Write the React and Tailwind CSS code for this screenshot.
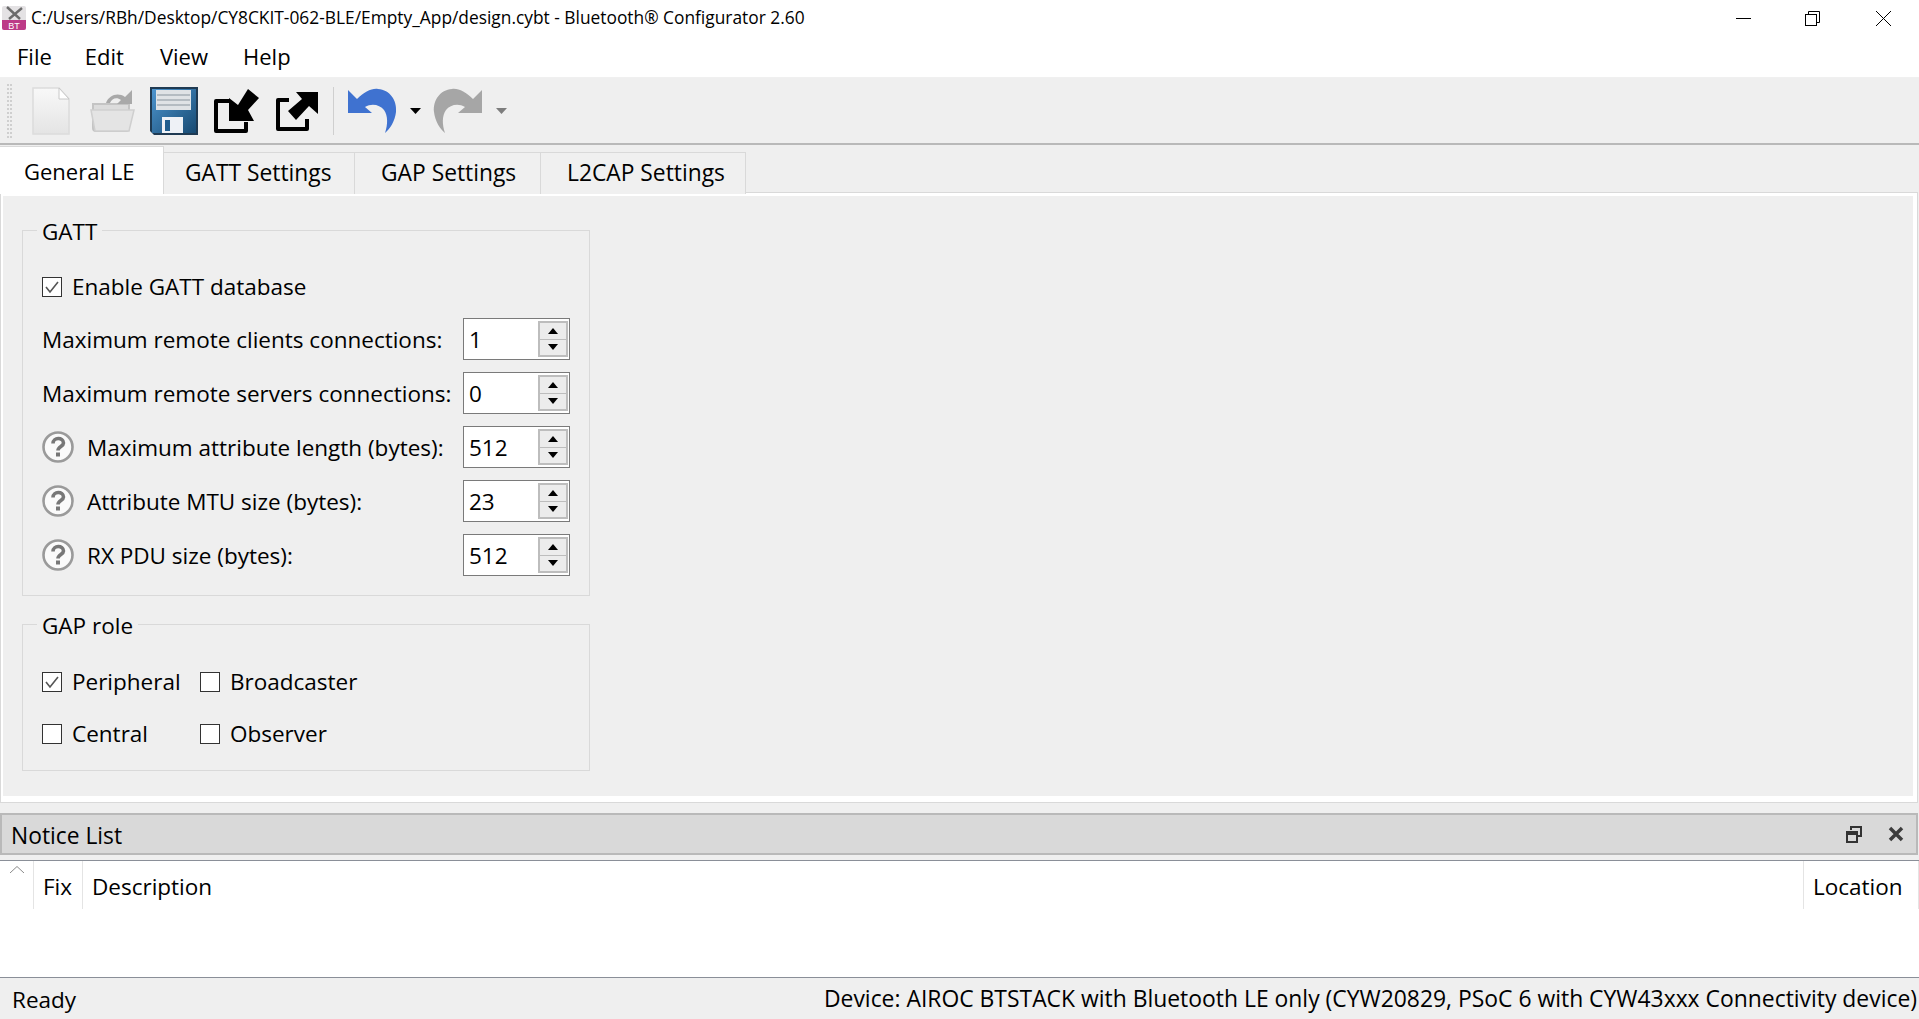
import React from "react";

const font = "font-['Open_Sans',sans-serif]";

const AppIcon = () => (
  <svg width="24" height="24" viewBox="0 0 24 24">
    <rect x="0" y="0" width="24" height="24" rx="2" fill="#e4e2e4" />
    <path d="M0 14h24v8a2 2 0 0 1-2 2H2a2 2 0 0 1-2-2z" fill="#bd3a87" />
    <path d="M5 1l13 12M20 2L7 13" stroke="#6b6b6b" strokeWidth="2.4" />
    <text x="12" y="22.500" textAnchor="middle" fontSize="9" fontFamily="Liberation Sans" fill="#fff">BT</text>
  </svg>
);

const NewIcon = () => (
  <svg width="38" height="48" viewBox="0 0 38 48">
    <defs>
      <linearGradient id="pg" x1="0" y1="0" x2="0" y2="1">
        <stop offset="0" stopColor="#f8f8f8" />
        <stop offset="1" stopColor="#e4e4e4" />
      </linearGradient>
    </defs>
    <path d="M1 1h26l10 11v35H1z" fill="url(#pg)" stroke="#dcdcdc" strokeWidth="1.5" />
    <path d="M27 1v11h10z" fill="#fff" stroke="#c8c8c8" />
  </svg>
);

const OpenIcon = () => (
  <svg width="45" height="46" viewBox="0 0 45 46">
    <path d="M3 16h36v24a3 3 0 0 1-3 3H6a3 3 0 0 1-3-3z" fill="#dcdcdc" stroke="#c4c4c4" strokeWidth="2" />
    <path d="M1 22h43l-5 21H5z" fill="#e4e4e4" stroke="#cfcfcf" strokeWidth="1.5" />
    <path d="M16 15c3-8 12-11 19-6l7-7v14H27l4-4c-4-3-9-2-11 3z" fill="#a9a9a9" />
  </svg>
);

const SaveIcon = () => (
  <svg width="48" height="48" viewBox="0 0 48 48">
    <defs>
      <linearGradient id="sv" x1="0" y1="0" x2="1" y2="1">
        <stop offset="0" stopColor="#4d95cf" />
        <stop offset="1" stopColor="#174a72" />
      </linearGradient>
    </defs>
    <path d="M0 0h48v48H4l-4-4z" fill="#1f3a52" />
    <rect x="2" y="2" width="44" height="44" fill="url(#sv)" />
    <rect x="6" y="3" width="35" height="20" fill="#dfe3e6" />
    <path d="M7 8h33M7 13h33M7 18h33" stroke="#b4bcc2" strokeWidth="2" />
    <rect x="12" y="30" width="21" height="16" fill="#eef1f6" />
    <rect x="15" y="33" width="5" height="11" fill="#1f5d8e" />
  </svg>
);

const ImportIcon = () => (
  <svg width="46" height="44" viewBox="0 0 46 44">
    <path d="M16 12H2v30h30v-9" fill="none" stroke="#000" strokeWidth="4" strokeLinejoin="round" />
    <path d="M34 0L45 9L34 21L40 32H15V9L24 16Z" fill="#000" />
  </svg>
);

const ExportIcon = () => (
  <svg width="42" height="40" viewBox="0 0 42 40">
    <path d="M13 9H2v29h29V28" fill="none" stroke="#000" strokeWidth="4" strokeLinejoin="round" />
    <path d="M20 1H42V23L33 15L20 29L12 20L26 8Z" fill="#000" />
  </svg>
);

const UndoIcon = ({ color, flip }) => (
  <svg width="49" height="46" viewBox="0 0 49 46" className={flip ? "-scale-x-100" : ""}>
    <path
      d="M0 2L9 11C16 4 24 0 30 1C42 2 49 12 48 24C47 33 42 41 37 45C40 36 40 28 36 22C32 17 24 15 17 19L24 25H0Z"
      fill={color}
    />
  </svg>
);

const Caret = ({ color }) => (
  <svg width="11" height="6" viewBox="0 0 11 6">
    <path d="M0 0h11L5.5 6z" fill={color} />
  </svg>
);

const HelpIcon = () => (
  <svg width="32" height="32" viewBox="0 0 32 32" className="shrink-0">
    <circle cx="16" cy="16" r="14.500" fill="#fafafa" stroke="#9a9a9a" strokeWidth="2.600" />
    <path d="M11 12.500c0-6.500 10.500-6.500 10.500-.5 0 3.500-5.500 3.500-5.500 7.500" fill="none" stroke="#777777" strokeWidth="3.600" />
    <rect x="14" y="21.500" width="4" height="4" fill="#777777" />
  </svg>
);

const CheckBox = ({ checked }) => (
  <span className="flex h-5 w-5 shrink-0 items-center justify-center border border-[#333333] bg-white">
    {checked && (
      <svg width="16" height="16" viewBox="0 0 16 16">
        <path d="M2 8l4 5 8-10" fill="none" stroke="#555555" strokeWidth="1.6" />
      </svg>
    )}
  </span>
);

const Check = ({ label, checked, textClass = "-mt-px" }) => (
  <label className="flex h-[30px] items-center gap-[10px]">
    <CheckBox checked={checked} />
    <span className={textClass}>{label}</span>
  </label>
);

const SpinBox = ({ value }) => (
  <div className="flex h-[42px] w-[107px] items-center justify-between border border-[#7a7a7a] bg-white pl-[5px] pr-px">
    <span className="pt-px">{value}</span>
    <div className="flex h-9 w-[30px] flex-col border-2 border-[#bdbdbd] bg-[#ececec]">
      <span className="flex flex-1 items-center justify-center border-b border-[#bdbdbd]">
        <svg width="10" height="6" viewBox="0 0 10 6"><path d="M0 6h10L5 0z" fill="#000" /></svg>
      </span>
      <span className="flex flex-1 items-center justify-center">
        <svg width="10" height="6" viewBox="0 0 10 6"><path d="M0 0h10L5 6z" fill="#000" /></svg>
      </span>
    </div>
  </div>
);

const SpinRow = ({ label, value, help }) => (
  <div className="flex items-center justify-between">
    <div className="flex items-center gap-[13px]">
      {help && <HelpIcon />}
      <span className="pt-px">{label}</span>
    </div>
    <SpinBox value={value} />
  </div>
);

const GroupBox = ({ title, children, className }) => (
  <fieldset className={"border border-[#d9d9d9] " + className}>
    <legend className="-ml-[5px] px-[5px] leading-[30px]">
      <span className="block translate-y-[2px]">{title}</span>
    </legend>
    {children}
  </fieldset>
);

const tabs = ["GATT Settings", "GAP Settings", "L2CAP Settings"];

export default function App() {
  return (
    <div className={"flex h-screen w-full flex-col overflow-hidden bg-[#efefef] text-[22.500px] text-black " + font}>
      {/* title bar */}
      <div className="flex h-9 items-center bg-white">
        <div className="ml-[2px]"><AppIcon /></div>
        <span className="ml-[5px] text-[17.350px] leading-none">
          C:/Users/RBh/Desktop/CY8CKIT-062-BLE/Empty_App/design.cybt - Bluetooth® Configurator 2.60
        </span>
        <div className="ml-auto flex items-center">
          <svg width="15" height="15" viewBox="0 0 15 15" className="mr-[54px]"><path d="M0 7.500h15" stroke="#000" strokeWidth="1" /></svg>
          <svg width="15" height="15" viewBox="0 0 15 15" className="mr-[56px]">
            <path d="M3.500 3V.5h11v11H12" fill="none" stroke="#000" />
            <rect x=".5" y="3.500" width="11" height="11" fill="#fff" stroke="#000" />
          </svg>
          <svg width="15" height="15" viewBox="0 0 15 15" className="mr-7"><path d="M0 0l15 15M15 0L0 15" stroke="#000" strokeWidth="1" /></svg>
        </div>
      </div>

      {/* menu */}
      <div className="flex h-[42px] items-center border-b border-[#f0f0f0] bg-white pl-[17px] text-[22px]">
        <span className="mr-[33px]">File</span>
        <span className="mr-[36px]">Edit</span>
        <span className="mr-[35px]">View</span>
        <span>Help</span>
      </div>

      {/* toolbar */}
      <div className="flex h-[67px] shrink-0 items-center border-b-2 border-[#b9b9b9]">
        <div className="ml-[7px] h-[54px] w-[5px] border-x-2 border-dotted border-[#cfcfcf]" />
        <div className="ml-5"><NewIcon /></div>
        <div className="ml-5"><OpenIcon /></div>
        <div className="ml-[15px]"><SaveIcon /></div>
        <div className="ml-4"><ImportIcon /></div>
        <div className="ml-4"><ExportIcon /></div>
        <div className="ml-[15px] h-12 w-px bg-[#cfcfcf]" />
        <div className="ml-[14px]"><UndoIcon color="#3f72d0" /></div>
        <div className="ml-[13px]"><Caret color="#000" /></div>
        <div className="ml-3"><UndoIcon color="#a6a6a6" flip /></div>
        <div className="ml-[14px]"><Caret color="#7d7d7d" /></div>
      </div>

      {/* tabs */}
      <div className="relative z-10 -mb-[2px] mt-px flex h-[48px] shrink-0 items-end text-[22.800px]">
        <div className="flex h-[48px] w-[164px] items-center border-r border-t border-[#d9d9d9] bg-white pl-[24px] pt-px text-[22px]">
          General LE
        </div>
        {tabs.map((t, i) => (
          <div
            key={t}
            className={
              "flex h-[42px] items-center border-r border-t border-[#d9d9d9] bg-[#f0f0f0] " +
              (i === 0 ? "w-[191px] pl-[21px]" : i === 1 ? "w-[186px] pl-[26px]" : "w-[205px] pl-[26px]")
            }
          >
            {t}
          </div>
        ))}
      </div>

      {/* pane */}
      <div className="mr-px flex h-[611px] shrink-0 border border-[#d9d9d9] bg-white pb-[6px] pl-[2px] pr-[4px] pt-[3px]">
        <div className="flex-1 bg-[#efefef] pl-[19px] pt-[19px]">
          <GroupBox title="GATT" className="h-[381px] w-[568px] px-[19px]">
            <div className="mt-[27px]">
              <Check label="Enable GATT database" checked textClass="" />
            </div>
            <div className="mt-[16px] flex flex-col gap-3">
              <SpinRow label="Maximum remote clients connections:" value="1" />
              <SpinRow label="Maximum remote servers connections:" value="0" />
              <SpinRow label="Maximum attribute length (bytes):" value="512" help />
              <SpinRow label="Attribute MTU size (bytes):" value="23" help />
              <SpinRow label="RX PDU size (bytes):" value="512" help />
            </div>
          </GroupBox>
          <GroupBox title="GAP role" className="mt-[13px] h-[162px] w-[568px] px-[19px]">
            <div className="mt-[28px] grid grid-cols-[158px_auto] justify-start gap-y-[22px]">
              <Check label="Peripheral" checked />
              <Check label="Broadcaster" />
              <Check label="Central" />
              <Check label="Observer" />
            </div>
          </GroupBox>
        </div>
      </div>

      {/* notice list */}
      <div className="mr-px mt-[10px] flex h-[42px] shrink-0 items-center justify-between border-2 border-[#b9b9b9] bg-[#d9d9d9] pl-[9px] pr-[12px]">
        <span className="pt-1 text-[22.800px]">Notice List</span>
        <div className="flex items-center gap-[26px]">
          <svg width="16" height="17" viewBox="0 0 16 17">
            <path d="M5 4V1h10v9h-4" fill="none" stroke="#333" strokeWidth="2" />
            <rect x="1" y="6" width="10" height="10" fill="none" stroke="#333" strokeWidth="2" />
            <path d="M1 8h10" stroke="#333" strokeWidth="2" />
          </svg>
          <svg width="16" height="16" viewBox="0 0 16 16"><path d="M2 2l12 12M14 2L2 14" stroke="#3c3c3c" strokeWidth="3.500" /></svg>
        </div>
      </div>
      <div className="mt-[5px] h-[118px] shrink-0 border-y border-[#8a8f98] bg-white">
        <div className="flex h-[48px] items-center">
          <div className="flex h-full w-[34px] justify-center border-r border-[#e4e4e4] pt-[5px]">
            <svg width="14" height="7" viewBox="0 0 14 7"><path d="M0 7l7-6.500L14 7" fill="none" stroke="#8a8a8a" /></svg>
          </div>
          <div className="flex h-full w-[49px] items-center border-r border-[#e4e4e4] pl-[9px] pt-[3px]">Fix</div>
          <div className="flex h-full flex-1 items-center border-r border-[#e4e4e4] pl-[9px] pt-[3px]">Description</div>
          <div className="flex h-full w-[115px] items-center border-r border-[#e4e4e4] pl-[9px] pt-[3px]">Location</div>
        </div>
      </div>

      {/* status bar */}
      <div className="flex flex-1 items-center justify-between pl-3 pr-[2px] pt-[2px]">
        <span>Ready</span>
        <span className="text-[22.900px]">Device: AIROC BTSTACK with Bluetooth LE only (CYW20829, PSoC 6 with CYW43xxx Connectivity device)</span>
      </div>
    </div>
  );
}
